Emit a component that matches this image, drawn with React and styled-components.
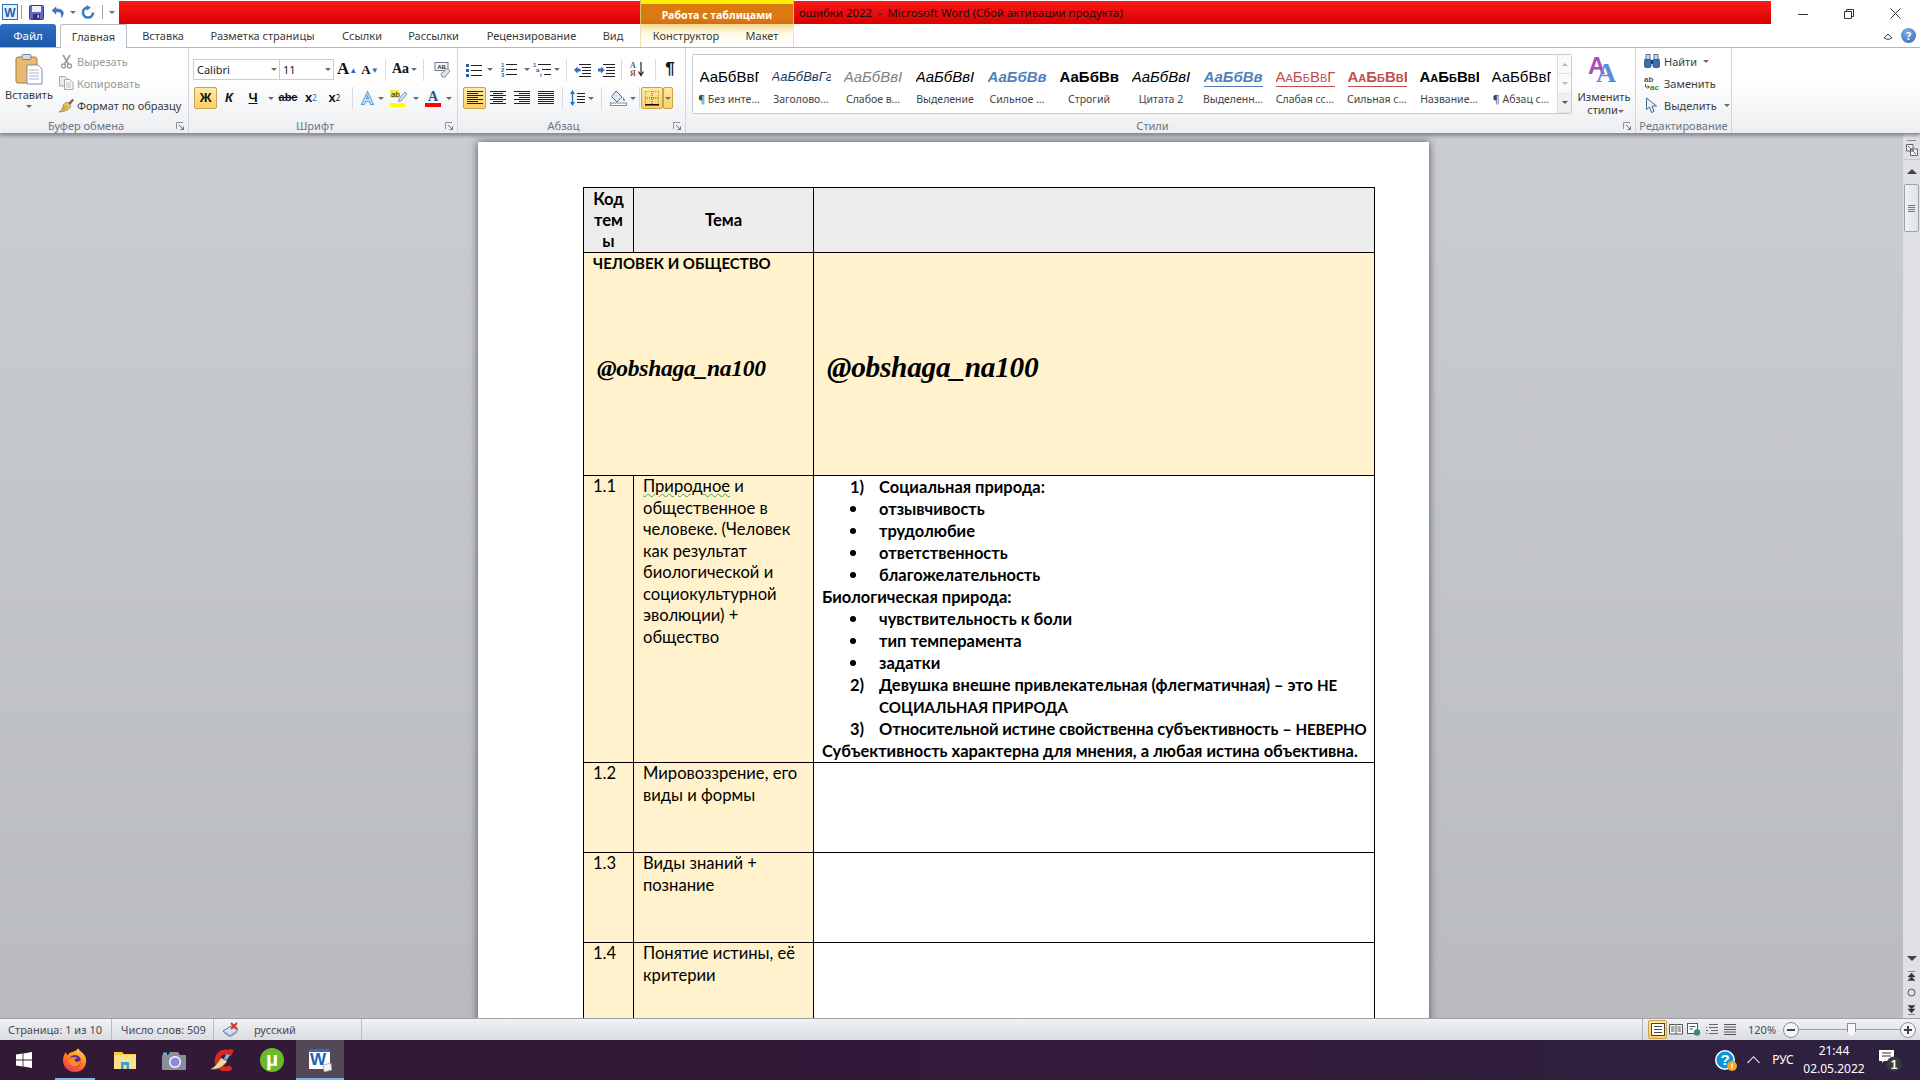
import React from "react";
import styled, { createGlobalStyle } from "styled-components";

const UI = `"Noto Sans", "Open Sans", sans-serif`;
const DOC = `Lato, "Open Sans", "Noto Sans", sans-serif`;

const GlobalStyle = createGlobalStyle`
  html, body { margin: 0; padding: 0; background: #fff; overflow: hidden; }
  * { box-sizing: border-box; }
`;

/* ---------- icons ---------- */

const Svg = ({ w = 16, h = 16, children }) => (
  <svg width={w} height={h} viewBox={`0 0 ${w} ${h}`} style={{ display: "block", flex: "none" }}>
    {children}
  </svg>
);

const Lines = ({ rows, color = "#222", w = 16, h = 14 }) => (
  <Svg w={w} h={h}>
    {rows.map(([x1, x2, y], i) => (
      <rect key={i} x={x1} y={y} width={x2 - x1} height="1" fill={color} />
    ))}
  </Svg>
);

const alignRows = (kind) =>
  [0, 2, 4, 6, 8, 10, 12].map((y, i) => {
    const short = i % 2 === 1;
    if (kind === "left") return [0, short ? 11 : 16, y];
    if (kind === "right") return [short ? 5 : 0, 16, y];
    if (kind === "center") return [short ? 3 : 0, short ? 13 : 16, y];
    return [0, 16, y];
  });

const WordMini = () => (
  <Svg w={16} h={16}>
    <rect x="0.5" y="0.5" width="15" height="15" fill="#e8f1fb" stroke="#2b6cb8" />
    <text x="8" y="12.5" fontSize="12" fontWeight="700" textAnchor="middle" fill="#1d5fb0" fontFamily="Liberation Sans">W</text>
  </Svg>
);

const SaveIcon = () => (
  <Svg w={15} h={15}>
    <rect x="0.5" y="0.5" width="14" height="14" rx="1" fill="#6a66c6" stroke="#3b3a86" />
    <rect x="3" y="1" width="9" height="6" fill="#eef0fa" />
    <rect x="4" y="9" width="7" height="5" fill="#2f2f72" />
    <rect x="8.5" y="10" width="1.5" height="3" fill="#d8d8ef" />
  </Svg>
);

const UndoIcon = () => (
  <Svg w={15} h={14}>
    <path d="M5 2 L1 5.5 L5 9 V6.8 C9 6.4 11 8 10.5 12.5 C13.5 9 13.6 3.6 5 4 Z" fill="#3d78c4" stroke="#1f5ba6" strokeWidth="0.5" />
  </Svg>
);

const RedoIcon = () => (
  <Svg w={14} h={14}>
    <path d="M7 2.5 A5 5 0 1 0 12 7.5" fill="none" stroke="#3d78c4" strokeWidth="2.6" />
    <path d="M5.5 0 L10 2.8 L5.5 5.6 Z" fill="#3d78c4" />
  </Svg>
);

const PasteIcon = () => (
  <Svg w={28} h={31}>
    <rect x="1" y="3" width="21" height="26" rx="2" fill="#e9b872" stroke="#a97b3a" />
    <rect x="7" y="0.5" width="9" height="5" rx="1" fill="#d5d8de" stroke="#7d8490" />
    <path d="M12 11 H23 L27 15 V30 H12 Z" fill="#fff" stroke="#7f8ea3" />
    <path d="M14 16 H24 M14 19 H24 M14 22 H24 M14 25 H24" stroke="#a9b6c8" />
  </Svg>
);

const ScissorsIcon = () => (
  <Svg w={13} h={15}>
    <path d="M3 1 L8.5 10 M10 1 L4.5 10" stroke="#9b9b9b" strokeWidth="1.6" />
    <circle cx="3.5" cy="12" r="2" fill="none" stroke="#9b9b9b" strokeWidth="1.3" />
    <circle cx="9.5" cy="12" r="2" fill="none" stroke="#9b9b9b" strokeWidth="1.3" />
  </Svg>
);

const CopyIcon = () => (
  <Svg w={15} h={14}>
    <path d="M0.5 0.5 H6 L8 2.5 V10 H0.5 Z" fill="#ececec" stroke="#a8a8a8" />
    <path d="M5.5 3.5 H11 L14 6.5 V13.5 H5.5 Z" fill="#f6f6f6" stroke="#a8a8a8" />
    <path d="M7 7 H12 M7 9 H12 M7 11 H12" stroke="#c4c4c4" />
  </Svg>
);

const BrushIcon = () => (
  <Svg w={17} h={15}>
    <path d="M10 5 L14.5 0.8 L16 2.2 L12 7 Z" fill="#7a6a3a" />
    <path d="M9 4 L13 8 C11 12 6 14 1 14 C4 12 5 10 5.5 6.5 Z" fill="#e8c860" stroke="#8a7430" strokeWidth="0.7" />
    <path d="M5 10 L9 7 M4 12 L10 9" stroke="#9a8438" strokeWidth="0.7" />
  </Svg>
);

const ProofIcon = () => (
  <Svg w={17} h={16}>
    <rect x="1" y="0.5" width="13" height="8" fill="#f4f7fb" stroke="#6b7a8f" />
    <text x="7.5" y="7" fontSize="6" fontWeight="700" textAnchor="middle" fill="#333" fontFamily="Liberation Sans">AB</text>
    <path d="M7 12 L13 6.5 L16 9 L11 15 H8 Z" fill="#dfe4ea" stroke="#6b7a8f" strokeWidth="0.8" />
  </Svg>
);

const TextFxIcon = () => (
  <Svg w={15} h={16}>
    <path d="M7.5 1.5 L13.5 14.5 H10.6 L9.4 11.5 H5.6 L4.4 14.5 H1.5 Z M6.5 9 H8.5 L7.5 6 Z" fill="#cfe6fa" stroke="#5aa3e0" strokeWidth="1.1" />
  </Svg>
);

const HighlightIcon = () => (
  <Svg w={17} h={18}>
    <rect x="0" y="1" width="9" height="8" fill="#e6e600" opacity="0.7" />
    <text x="1" y="8" fontSize="8" fill="#222" fontFamily="Liberation Sans">ab</text>
    <path d="M9 10 L15 3 L17 5 L11 12 L8.5 12.5 Z" fill="#d6e4f3" stroke="#5a7ca0" strokeWidth="0.8" />
    <rect x="0" y="14" width="16" height="4" fill="#ffff00" />
  </Svg>
);

const FontColorIcon = () => (
  <Svg w={16} h={18}>
    <text x="8" y="12" fontSize="14" fontWeight="700" textAnchor="middle" fill="#2c4f8c" fontFamily="Liberation Serif">A</text>
    <rect x="0" y="14" width="16" height="4" fill="#ff0000" />
  </Svg>
);

const BulletsIcon = () => (
  <Svg w={16} h={14}>
    {[1, 6, 11].map((y) => (
      <g key={y}>
        <rect x="0" y={y} width="3" height="3" fill="#2a5fa8" />
        <rect x="5" y={y + 1} width="11" height="1" fill="#222" />
      </g>
    ))}
  </Svg>
);

const NumbersIcon = () => (
  <Svg w={16} h={16}>
    {[["1", 5], ["2", 10], ["3", 15]].map(([n, y]) => (
      <g key={n}>
        <text x="0" y={y} fontSize="6" fontWeight="700" fill="#2a5fa8" fontFamily="Liberation Sans">{n}</text>
        <rect x="5" y={y - 3} width="11" height="1" fill="#222" />
      </g>
    ))}
  </Svg>
);

const MultiIcon = () => (
  <Svg w={18} h={16}>
    <text x="0" y="5" fontSize="6" fontWeight="700" fill="#2a5fa8" fontFamily="Liberation Sans">1</text>
    <text x="3" y="10" fontSize="6" fontWeight="700" fill="#2a5fa8" fontFamily="Liberation Sans">a</text>
    <text x="7" y="15" fontSize="6" fontWeight="700" fill="#2a5fa8" fontFamily="Liberation Sans">i</text>
    <path d="M5 2.5 H18 M9 7.5 H18 M11 12.5 H18" stroke="#222" />
  </Svg>
);

const IndentIcon = ({ flip }) => (
  <Svg w={17} h={14}>
    <path d="M5 1.5 H17 M8 4.5 H17 M8 7.5 H17 M8 10.5 H17 M5 13.5 H17" stroke="#222" />
    <path d={flip ? "M0 5.5 H3 V3.5 L6.5 7 L3 10.5 V8.5 H0 Z" : "M6.5 5.5 H3.5 V3.5 L0 7 L3.5 10.5 V8.5 H6.5 Z"} fill="#2a6fc0" />
  </Svg>
);

const SortIcon = () => (
  <Svg w={15} h={17}>
    <text x="0" y="7" fontSize="8" fontWeight="700" fill="#2a5fa8" fontFamily="Liberation Serif">А</text>
    <text x="0" y="15" fontSize="8" fontWeight="700" fill="#a0522d" fontFamily="Liberation Serif">Я</text>
    <path d="M11 1 V13 M8.5 10.5 L11 14.5 L13.5 10.5" fill="none" stroke="#222" strokeWidth="1.2" />
  </Svg>
);

const LineSpacingIcon = () => (
  <Svg w={15} h={16}>
    <path d="M2.5 0 L5 4 H0 Z M2.5 16 L5 12 H0 Z" fill="#2a6fc0" />
    <rect x="1.8" y="4" width="1.4" height="8" fill="#2a6fc0" />
    <path d="M7 3.5 H15 M7 6.5 H15 M7 9.5 H15 M7 12.5 H15" stroke="#222" />
  </Svg>
);

const ShadingIcon = () => (
  <Svg w={17} h={16}>
    <path d="M6 1 L12 7 L7 12 L1.5 6.5 Z" fill="#dce9f6" stroke="#4d6f93" />
    <path d="M13 7 C14.5 9 15.5 10 14.5 11 C13.5 11.5 12.5 10 13 7 Z" fill="#3d8bd0" />
    <rect x="0.5" y="13" width="16" height="2.5" fill="#fff" stroke="#8b8b8b" />
  </Svg>
);

const BordersIcon = () => (
  <Svg w={14} h={15}>
    <rect x="0" y="0" width="14" height="14" fill="none" stroke="#555" strokeDasharray="1 1" />
    <path d="M7 0 V14 M0 7 H14" stroke="#555" strokeDasharray="1 1" />
    <rect x="0" y="13" width="14" height="1.5" fill="#111" />
  </Svg>
);

const ChangeStylesIcon = () => (
  <Svg w={32} h={30}>
    <text x="0" y="20" fontSize="24" fontWeight="700" fill="#a94dbb" fontFamily="Liberation Sans">A</text>
    <text x="8" y="28" fontSize="28" fontWeight="700" fill="#5a8fd8" fontFamily="Liberation Serif">A</text>
  </Svg>
);

const BinocularsIcon = () => (
  <Svg w={16} h={14}>
    <rect x="0.5" y="5" width="6.5" height="8.5" rx="1.5" fill="#3d6fae" stroke="#203f70" strokeWidth="0.7" />
    <rect x="9" y="5" width="6.5" height="8.5" rx="1.5" fill="#3d6fae" stroke="#203f70" strokeWidth="0.7" />
    <rect x="2" y="0.5" width="4" height="5" fill="#c9d9ee" stroke="#203f70" strokeWidth="0.7" />
    <rect x="10" y="0.5" width="4" height="5" fill="#c9d9ee" stroke="#203f70" strokeWidth="0.7" />
    <rect x="7" y="6" width="2" height="4" fill="#203f70" />
  </Svg>
);

const ReplaceIcon = () => (
  <Svg w={17} h={16}>
    <text x="0" y="7" fontSize="8" fontWeight="700" fill="#555" fontFamily="Liberation Sans">ab</text>
    <text x="6" y="15" fontSize="8" fontWeight="700" fill="#1f8a3a" fontFamily="Liberation Sans">ac</text>
    <path d="M1.5 9 V12 H5 M3.5 10.5 L5.5 12 L3.5 13.5" fill="none" stroke="#333" strokeWidth="0.8" />
  </Svg>
);

const CursorIcon = () => (
  <Svg w={13} h={17}>
    <path d="M1.5 1 L1.5 12.5 L4.5 10 L6.5 15.5 L9 14.5 L7 9.2 L11.5 9 Z" fill="#eaf1fa" stroke="#4a6a90" />
  </Svg>
);

const SpellIcon = () => (
  <Svg w={17} h={15}>
    <path d="M1 9 L9 4 L16 8 L8 14 Z" fill="#cfe0f4" stroke="#5878a4" />
    <path d="M2 11 L8 15 L16 10" fill="none" stroke="#8fa5c4" />
    <path d="M9 1 L15 7 M15 1 L9 7" stroke="#e03020" strokeWidth="2" />
  </Svg>
);

const ViewIcon = ({ kind }) => (
  <Svg w={14} h={13}>
    {kind === "print" && (
      <>
        <rect x="0.5" y="0.5" width="13" height="12" fill="#fff" stroke="#444" />
        <path d="M3 3.5 H11 M3 6.5 H11 M3 9.5 H11" stroke="#444" />
      </>
    )}
    {kind === "read" && (
      <>
        <path d="M0.5 1.5 H6.5 L7 2 L7.5 1.5 H13.5 V11 H0.5 Z" fill="#fff" stroke="#555" />
        <path d="M7 2 V11 M2 4 H5.5 M2 6 H5.5 M2 8 H5.5 M8.5 4 H12 M8.5 6 H12 M8.5 8 H12" stroke="#555" />
      </>
    )}
    {kind === "web" && (
      <>
        <rect x="0.5" y="0.5" width="10" height="10" fill="#fff" stroke="#555" />
        <path d="M2.5 3.5 H8.5 M2.5 6 H6" stroke="#555" />
        <circle cx="10" cy="9.5" r="3.2" fill="#3a8c6a" />
      </>
    )}
    {kind === "outline" && <path d="M4 1.5 H13 M1 4.5 H2 M4 4.5 H13 M6 7.5 H13 M1 7.5 H3 M4 10.5 H13 M1 10.5 H2" stroke="#666" />}
    {kind === "draft" && <path d="M1 1.5 H13 M1 4 H13 M1 6.5 H13 M1 9 H13 M1 11.5 H13" stroke="#555" />}
  </Svg>
);

const RoundBtn = ({ plus }) => (
  <Svg w={16} h={16}>
    <circle cx="8" cy="8" r="7.5" fill="#f4f5f7" stroke="#8a8f96" />
    <path d={plus ? "M4 8 H12 M8 4 V12" : "M4 8 H12"} stroke="#444" strokeWidth="2" />
  </Svg>
);

const WindowsLogo = () => (
  <Svg w={16} h={16}>
    <path d="M0 2.4 L6.6 1.5 V7.5 H0 Z M7.4 1.4 L16 0 V7.5 H7.4 Z M0 8.5 H6.6 V14.5 L0 13.6 Z M7.4 8.5 H16 V16 L7.4 14.6 Z" fill="#fff" />
  </Svg>
);

const FirefoxLogo = () => (
  <Svg w={24} h={24}>
    <defs>
      <linearGradient id="ffx" x1="0.7" y1="0" x2="0.2" y2="1">
        <stop offset="0" stopColor="#ffd53d" />
        <stop offset="0.5" stopColor="#ff7a1f" />
        <stop offset="1" stopColor="#ee2a6c" />
      </linearGradient>
    </defs>
    <path d="M15 0 C16 3 20 4 22 8 C25 14 22 24 12 24 C4 24 0 18 0 12 C0 8 2 5 3 4 C3 6 4 7 5 7 C6 4 10 4 12 3 C14 2 15 1 15 0 Z" fill="url(#ffx)" />
    <circle cx="12" cy="13" r="6" fill="#5a2a9c" />
    <path d="M6 11 C8 9 12 8 15 10 C13 10 11 11 12 13 C14 15 17 13 18 12 C18 17 13 20 9 18 C6 16 5 14 6 11 Z" fill="#ff8a1f" />
  </Svg>
);

const FolderLogo = () => (
  <Svg w={22} h={18}>
    <path d="M0 1 H8 L10 3 H22 V18 H0 Z" fill="#f5c842" />
    <rect x="0" y="4" width="22" height="14" fill="#ffe08a" />
    <rect x="7" y="11" width="8" height="7" fill="#3b9ad9" />
    <rect x="9.5" y="14" width="3" height="4" fill="#ffe08a" />
  </Svg>
);

const CameraLogo = () => (
  <Svg w={24} h={19}>
    <path d="M1 4 H6 L8 1 H16 L18 4 H23 Q24 4 24 5 V18 Q24 19 23 19 H1 Q0 19 0 18 V5 Q0 4 1 4 Z" fill="#8a9097" />
    <rect x="1" y="1.5" width="4" height="2.5" fill="#5bb4e8" />
    <circle cx="13" cy="11" r="6" fill="#fff" />
    <circle cx="13" cy="11" r="4.6" fill="#8f87e8" />
  </Svg>
);

const CCleanerLogo = () => (
  <Svg w={25} h={22}>
    <path d="M21 5 A8.5 8.5 0 1 0 21 18" fill="none" stroke="#d8291e" strokeWidth="5" />
    <path d="M19 0 L24 1 L21 7 L17 6 Z" fill="#d8291e" />
    <path d="M16 5 L14 10 L17 11 L20 6 Z" fill="#7ab1d8" />
    <path d="M11 9 L17 12 C14 17 8 21 1 20 C5 18 8 14 11 9 Z" fill="#ecd9a8" stroke="#a88c50" strokeWidth="0.6" />
  </Svg>
);

const TorrentLogo = () => (
  <Svg w={24} h={24}>
    <circle cx="12" cy="12" r="12" fill="#6cb82f" />
    <text x="12" y="18" fontSize="21" fontWeight="700" textAnchor="middle" fill="#fff" fontFamily="Liberation Sans">µ</text>
  </Svg>
);

const WordLogo = () => (
  <Svg w={24} h={23}>
    <rect x="1" y="0" width="21" height="20" fill="#fff" />
    <rect x="1" y="0" width="21" height="3" fill="#2b6cc4" />
    <text x="10" y="16" fontSize="17" fontWeight="700" textAnchor="middle" fill="#1c5fb5" fontFamily="Liberation Sans">W</text>
    <path d="M15 16 L23 14 L24 21 L16 23 Z" fill="#f2f2f2" stroke="#8a8a8a" strokeWidth="0.6" />
  </Svg>
);

const HelpTray = () => (
  <Svg w={24} h={23}>
    <circle cx="11" cy="11" r="10" fill="#fff" />
    <circle cx="11" cy="11" r="8.5" fill="#0c95d8" />
    <text x="11" y="16" fontSize="15" fontWeight="700" textAnchor="middle" fill="#fff" fontFamily="Liberation Sans">?</text>
    <circle cx="18" cy="17" r="5" fill="#f5a623" />
    <rect x="17.3" y="14.5" width="1.4" height="5" fill="#fff" />
  </Svg>
);

const NotifyIcon = () => (
  <Svg w={24} h={24}>
    <path d="M0 2 H15 V13 H5 L3 15 V13 H0 Z" fill="#fff" />
    <path d="M3 5 H12 M3 8 H12" stroke="#333" />
    <circle cx="15" cy="16" r="7.5" fill="#3a3a3c" />
    <text x="15" y="20.5" fontSize="12" fontWeight="700" textAnchor="middle" fill="#fff" fontFamily="Liberation Sans">1</text>
  </Svg>
);

const LauncherIcon = () => (
  <Svg w={8} h={8}>
    <path d="M0.5 7 V0.5 H7" fill="none" stroke="#8c929a" />
    <path d="M3 3 L7.5 7.5 M7.5 4.5 V7.5 H4.5" fill="none" stroke="#6f757d" />
  </Svg>
);

/* ---------- app frame ---------- */

const Root = styled.div`
  width: 1920px;
  height: 1080px;
  display: flex;
  flex-direction: column;
  overflow: hidden;
  font-family: ${UI};
  background: #fff;
`;

const TitleBar = styled.div`
  height: 24px;
  flex: none;
  display: flex;
  align-items: stretch;
  background: #fff;
`;

const Qat = styled.div`
  width: 119px;
  display: flex;
  align-items: center;
  padding: 0 0 0 2px;
`;

const QatSlot = styled.div`
  width: ${(p) => p.$w}px;
  display: flex;
  justify-content: center;
  align-items: center;
`;

const QatSep = styled.div`
  width: 1px;
  height: 14px;
  background: #9aa0a8;
  margin: 0 3px;
`;

const RedBand = styled.div`
  margin-top: 1px;
  background: linear-gradient(#fb1a1a, #d90000);
  width: ${(p) => p.$w}px;
  display: flex;
  align-items: center;
  padding-left: 5px;
  font-size: 11.4px;
  color: #111;
  white-space: pre;
`;

const ContextHead = styled.div`
  width: 154px;
  border-left: 1px solid #d9c16a;
  border-right: 1px solid #d9c16a;
  background: linear-gradient(#fff000 0 4px, #dc7a12 4px, #dc7a12 18px, #d96a16);
  color: #fff;
  font-weight: 700;
  font-size: 10.7px;
  text-align: center;
  padding-top: 7px;
  line-height: 16px;
  white-space: nowrap;
`;

const WinControls = styled.div`
  margin-left: auto;
  display: flex;
  padding: 3px 2px 0 0;
`;

const WinBtn = styled.div`
  width: 46px;
  display: flex;
  justify-content: center;
  align-items: center;
`;

const TabRow = styled.div`
  height: 24px;
  flex: none;
  display: flex;
  align-items: flex-end;
  border-bottom: 1px solid #b6bcc4;
  background: #fff;
  position: relative;
`;

const FileTab = styled.div`
  width: 56px;
  height: 23px;
  margin-right: 4px;
  border-radius: 3px 3px 0 0;
  background: linear-gradient(#2f71c5, #1a56a8);
  color: #fff;
  font-size: 11.5px;
  text-align: center;
  line-height: 23px;
`;

const Tab = styled.div`
  width: ${(p) => p.$w}px;
  flex: none;
  height: ${(p) => (p.$active ? "24px" : "23px")};
  font-size: 11px;
  color: #3b3b3b;
  text-align: center;
  line-height: 24px;
  white-space: nowrap;
  ${(p) =>
    p.$active &&
    `
    background: #fff;
    border: 1px solid #b6bcc4;
    border-bottom: none;
    border-radius: 3px 3px 0 0;
    margin-bottom: -1px;
  `}
`;

const ContextTabs = styled.div`
  display: flex;
  height: 23px;
  width: 154px;
  margin-left: ${(p) => p.$ml}px;
  background: linear-gradient(#f5d98a, #fffbe8 40%, #fff);
  border-left: 1px solid #ece2b0;
  border-right: 1px solid #ece2b0;
`;

const Help = styled.div`
  margin-left: auto;
  display: flex;
  align-items: center;
  gap: 8px;
  height: 23px;
  padding-right: 4px;
`;

const HelpDot = styled.div`
  width: 15px;
  height: 15px;
  border-radius: 50%;
  background: radial-gradient(circle at 40% 30%, #7eaee8, #2a66b8);
  color: #fff;
  font-size: 11px;
  font-weight: 700;
  text-align: center;
  line-height: 15px;
`;

/* ---------- ribbon ---------- */

const Ribbon = styled.div`
  height: 86px;
  flex: none;
  display: flex;
  background: linear-gradient(#fff 35%, #eceef1);
  border-bottom: 1px solid #8d9299;
  box-shadow: 0 2px 3px rgba(60, 65, 75, 0.45);
  position: relative;
  z-index: 2;
`;

const Group = styled.div`
  width: ${(p) => p.$w}px;
  flex: none;
  display: flex;
  flex-direction: column;
  border-right: 1px solid #d3d6db;
`;

const GroupBody = styled.div`
  flex: 1;
  min-height: 0;
  display: flex;
  padding: ${(p) => p.$pad || "0"};
`;

const GroupLabel = styled.div`
  height: 16px;
  padding-top: 2px;
  flex: none;
  display: grid;
  grid-template-columns: ${(p) => (p.$launcher ? "1fr 16px" : "1fr")};
  align-items: start;
  font-size: 11px;
  color: #6d7480;
  text-align: center;
  line-height: 13px;
  white-space: nowrap;
  svg {
    margin: 3px 0 0 4px;
  }
`;

const BigButton = styled.div`
  width: ${(p) => p.$w}px;
  flex: none;
  display: flex;
  flex-direction: column;
  align-items: center;
  font-size: 11px;
  color: #3b3b3b;
  line-height: 13px;
  padding-top: ${(p) => p.$top || 0}px;
  text-align: center;
`;

const BigText = styled.div`
  margin-top: ${(p) => p.$mt || 4}px;
  white-space: nowrap;
`;

const Column = styled.div`
  display: flex;
  flex-direction: column;
`;

const SmallRow = styled.div`
  height: 22px;
  display: flex;
  align-items: center;
  gap: ${(p) => p.$gap || 3}px;
  font-size: 11px;
  color: ${(p) => (p.$dim ? "#9a9a9a" : "#3b3b3b")};
  white-space: nowrap;
`;

const IconSlot = styled.div`
  width: ${(p) => p.$w}px;
  display: flex;
  justify-content: center;
  flex: none;
`;

const ToolColumn = styled.div`
  display: flex;
  flex-direction: column;
  gap: 7px;
`;

const ToolRow = styled.div`
  height: ${(p) => p.$h || 22}px;
  display: flex;
  align-items: center;
`;

const Combo = styled.div`
  width: ${(p) => p.$w}px;
  height: 21px;
  background: #fff;
  border: 1px solid #c9ccd1;
  margin-left: -1px;
  display: flex;
  align-items: center;
  justify-content: space-between;
  padding: 0 5px 0 3px;
  font-size: 11px;
  color: #222;
`;

const Tool = styled.div`
  width: ${(p) => p.$w}px;
  height: 22px;
  flex: none;
  display: flex;
  align-items: center;
  justify-content: center;
  color: #111;
  border-radius: 2px;
  ${(p) =>
    p.$on &&
    `
    background: linear-gradient(#fee9a4, #fbcf63);
    border: 1px solid #c9a24a;
  `}
`;

const Sep = styled.div`
  width: ${(p) => p.$w || 11}px;
  height: 22px;
  flex: none;
  display: flex;
  justify-content: center;
  &::before {
    content: "";
    width: 1px;
    height: 100%;
    background: #d7dade;
  }
`;

const Caret = styled.div`
  width: ${(p) => p.$w || 0}px;
  flex: none;
  display: ${(p) => (p.$inline ? "inline-flex" : "flex")};
  justify-content: center;
  align-items: center;
  margin-left: ${(p) => p.$ml || 0}px;
  &::before {
    content: "";
    border-left: 3px solid transparent;
    border-right: 3px solid transparent;
    border-top: 3px solid #6c6c6c;
  }
`;

const Glyph = styled.span`
  font-family: ${(p) => p.$font || `"Liberation Serif", serif`};
  font-size: ${(p) => p.$size || 14}px;
  font-weight: ${(p) => p.$weight || 700};
  font-style: ${(p) => (p.$italic ? "italic" : "normal")};
  color: ${(p) => p.$color || "#111"};
  text-decoration: ${(p) => p.$deco || "none"};
  line-height: 1.2;
  white-space: nowrap;
`;

const Sup = styled.sup`
  font-size: 8px;
  line-height: 0;
  color: ${(p) => p.$color || "#111"};
`;

const Sub = styled.sub`
  font-size: 8px;
  line-height: 0;
  color: #3a6ab0;
`;

const Gallery = styled.div`
  width: 880px;
  height: 60px;
  flex: none;
  display: flex;
  background: #fff;
  border: 1px solid #c6c9ce;
  border-radius: 2px;
`;

const StyleItem = styled.div`
  width: 72px;
  flex: none;
  display: flex;
  flex-direction: column;
  align-items: center;
  padding-top: 12px;
`;

const StylePreview = styled.div`
  width: 59px;
  height: 20px;
  overflow: hidden;
  white-space: nowrap;
  text-align: center;
  font-family: "Liberation Sans", sans-serif;
  font-size: ${(p) => p.$size || 15}px;
  line-height: 19px;
  font-weight: ${(p) => (p.$bold ? 700 : 400)};
  font-style: ${(p) => (p.$italic ? "italic" : "normal")};
  color: ${(p) => p.$color || "#000"};
  font-variant: ${(p) => (p.$caps ? "small-caps" : "normal")};
  ${(p) => p.$under && `border-bottom: 1px solid ${p.$color};`}
`;

const StyleLabel = styled.div`
  font-size: 10.5px;
  color: #444;
  margin-top: 6px;
  line-height: 13px;
  white-space: nowrap;
`;

const GalleryScroll = styled.div`
  margin-left: auto;
  width: 14px;
  flex: none;
  display: flex;
  flex-direction: column;
  border-left: 1px solid #d8dade;
`;

const ScrollCell = styled.div`
  flex: 1;
  display: flex;
  align-items: center;
  justify-content: center;
  border-bottom: 1px solid #e2e4e7;
  background: ${(p) => (p.$more ? "#eef0f3" : "#fafafa")};
  &::before {
    content: "";
    border-left: 3px solid transparent;
    border-right: 3px solid transparent;
    ${(p) => (p.$up ? "border-bottom: 3px solid #b5b8bd;" : `border-top: 3px solid ${p.$more ? "#555" : "#b5b8bd"};`)}
  }
`;

/* ---------- document ---------- */

const Main = styled.div`
  flex: 1;
  min-height: 0;
  display: flex;
  overflow: hidden;
`;

const Canvas = styled.div`
  flex: 1;
  min-width: 0;
  overflow: hidden;
  padding: 8px 0 0 478px;
  background: linear-gradient(#cacdd2, #b9bbbf);
`;

const Page = styled.div`
  width: 951px;
  height: 1100px;
  background: #fff;
  padding: 45px 0 0 105px;
  box-shadow: 0 0 8px rgba(50, 52, 60, 0.8);
`;

const DocTable = styled.table`
  width: 792px;
  table-layout: fixed;
  border-collapse: collapse;
  font-family: ${DOC};
  font-size: 16.6px;
  line-height: 21.5px;
  color: #000;
  td {
    border: 1px solid #000;
    padding: 0;
  }
`;

const HeadCell = styled.td`
  background: #ededed;
  font-weight: 700;
  text-align: center;
  vertical-align: middle;
  line-height: 21px;
`;

const TopicCell = styled.td`
  background: #fff2cc;
  vertical-align: top;
  padding: 0 4px 0 9px !important;
`;

const BodyCell = styled.td`
  vertical-align: top;
  padding: 0 2px 0 8px !important;
  font-weight: 700;
  font-size: 16.45px;
  line-height: 22px;
`;

const Caps = styled.span`
  font-size: 15.1px;
`;

const Heading = styled.div`
  font-weight: 700;
  font-size: 15px;
`;

const Signature = styled.div`
  font-family: "Liberation Serif", serif;
  font-style: italic;
  font-weight: 700;
  font-size: ${(p) => p.$size}px;
  line-height: 40px;
  letter-spacing: -0.3px;
  margin: ${(p) => p.$margin};
  white-space: nowrap;
`;

const Squiggle = styled.span`
  text-decoration: underline wavy #3aa655 1px;
  text-underline-offset: 1px;
`;

const ListRow = styled.div`
  display: flex;
  padding-left: 28px;
  white-space: nowrap;
  letter-spacing: ${(p) => (p.$tight ? "-0.13px" : "normal")};
`;

const Marker = styled.div`
  width: 29px;
  flex: none;
`;

const Dot = styled.div`
  width: 29px;
  flex: none;
  display: flex;
  align-items: center;
  &::before {
    content: "";
    width: 6px;
    height: 6px;
    border-radius: 50%;
    background: #000;
  }
`;

/* ---------- scrollbar ---------- */

const Scrollbar = styled.div`
  width: 17px;
  flex: none;
  display: flex;
  flex-direction: column;
  align-items: center;
  background: #dfe1e5;
`;

const RulerToggle = styled.div`
  width: 100%;
  height: 26px;
  display: flex;
  flex-direction: column;
  align-items: center;
  justify-content: flex-end;
  gap: 3px;
  padding-bottom: 3px;
  border-bottom: 1px solid #c4c7cc;
`;

const RulerDash = styled.div`
  width: 9px;
  height: 1px;
  background: #888;
`;

const Arrow = styled.div`
  height: ${(p) => p.$h}px;
  flex: none;
  display: flex;
  align-items: center;
  &::before {
    content: "";
    border-left: 5px solid transparent;
    border-right: 5px solid transparent;
    ${(p) => (p.$up ? "border-bottom: 5px solid #444;" : "border-top: 5px solid #444;")}
  }
`;

const Thumb = styled.div`
  width: 15px;
  height: 48px;
  flex: none;
  margin-top: 1px;
  background: linear-gradient(90deg, #f1f2f4, #dfe2e6);
  border: 1px solid #9ea3aa;
  border-radius: 2px;
  display: flex;
  align-items: center;
  justify-content: center;
`;

const ScrollSpace = styled.div`
  flex: 1;
`;

const NavGlyph = styled.div`
  height: 17px;
  flex: none;
  display: flex;
  align-items: center;
  justify-content: center;
`;

/* ---------- status + taskbar ---------- */

const StatusBar = styled.div`
  height: 22px;
  flex: none;
  display: flex;
  align-items: center;
  background: linear-gradient(#f1f2f4, #d9dce1);
  border-top: 1px solid #9ea2a8;
  font-size: 11px;
  color: #4a4a4a;
  position: relative;
  z-index: 2;
`;

const StatusCell = styled.div`
  width: ${(p) => p.$w}px;
  height: 100%;
  flex: none;
  display: flex;
  align-items: center;
  gap: ${(p) => p.$gap || 0}px;
  padding-left: ${(p) => p.$pl || 0}px;
  border-right: 1px solid #b8bbc0;
  white-space: nowrap;
`;

const StatusRight = styled.div`
  margin-left: auto;
  width: 278px;
  height: 100%;
  display: flex;
  align-items: center;
  border-left: 1px solid #b0b3b8;
  padding-left: 5px;
`;

const ViewBtn = styled.div`
  width: ${(p) => (p.$on ? 19 : 18)}px;
  height: 19px;
  flex: none;
  display: flex;
  align-items: center;
  justify-content: center;
  border-radius: 2px;
  ${(p) =>
    p.$on &&
    `
    background: linear-gradient(#fee9a4, #fbcf63);
    border: 1px solid #c9a24a;
  `}
`;

const Zoom = styled.div`
  width: 35px;
  flex: none;
  margin-left: 9px;
  color: #4a4a5a;
  font-size: 11px;
`;

const SliderTrack = styled.div`
  width: 101px;
  height: 1px;
  flex: none;
  background: #9ca1a8;
  display: flex;
  align-items: center;
  padding-left: 48px;
`;

const SliderThumb = styled.div`
  width: 9px;
  height: 14px;
  flex: none;
  background: #f6f7f8;
  border: 1px solid #8a8f96;
  clip-path: polygon(0 0, 100% 0, 100% 65%, 50% 100%, 0 65%);
`;

const Taskbar = styled.div`
  height: 40px;
  flex: none;
  display: flex;
  align-items: stretch;
  background: linear-gradient(90deg, #321a35, #34193a 55%, #2d2240);
  color: #fff;
`;

const TaskItem = styled.div`
  width: ${(p) => p.$w || 49}px;
  flex: none;
  position: relative;
  display: flex;
  align-items: center;
  justify-content: center;
  background: ${(p) => (p.$active ? "#544856" : "transparent")};
  ${(p) =>
    p.$open &&
    `
    &::after {
      content: "";
      position: absolute;
      left: ${p.$inset || 0}px;
      right: ${p.$inset || 0}px;
      bottom: 0;
      height: 2px;
      background: #76b9ed;
    }
  `}
`;

const StartItem = styled.div`
  width: 50px;
  flex: none;
  display: flex;
  align-items: center;
  justify-content: center;
  padding-right: 2px;
`;

const Tray = styled.div`
  margin-left: auto;
  display: flex;
  align-items: center;
  padding-right: 6px;
`;

const TraySlot = styled.div`
  width: ${(p) => p.$w}px;
  flex: none;
  display: flex;
  justify-content: center;
  align-items: center;
  font-size: 12px;
  line-height: 18px;
  text-align: center;
`;

const Clock = styled.div`
  white-space: nowrap;
`;

const Chevron = styled.div`
  width: 9px;
  height: 9px;
  margin-top: 5px;
  border-left: 1.3px solid #fff;
  border-top: 1.3px solid #fff;
  transform: rotate(45deg);
`;

/* ---------- data ---------- */

const tabs = [
  ["Вставка", 72],
  ["Разметка страницы", 127],
  ["Ссылки", 72],
  ["Рассылки", 71],
  ["Рецензирование", 125],
  ["Вид", 38],
];

const galleryStyles = [
  { p: "АаБбВвГ", l: "¶ Без инте..." },
  { p: "АаБбВвГг", l: "Заголово...", italic: true, color: "#17365d", size: 13 },
  { p: "АаБбВвI", l: "Слабое в...", italic: true, color: "#808080" },
  { p: "АаБбВвI", l: "Выделение", italic: true },
  { p: "АаБбВв", l: "Сильное ...", italic: true, bold: true, color: "#4f81bd" },
  { p: "АаБбВвI", l: "Строгий", bold: true },
  { p: "АаБбВвI", l: "Цитата 2", italic: true },
  { p: "АаБбВв", l: "Выделенн...", italic: true, bold: true, color: "#4f81bd", under: true },
  { p: "АаБбВвГ", l: "Слабая сс...", color: "#c0504d", under: true, caps: true },
  { p: "АаБбВвI", l: "Сильная с...", color: "#c0504d", under: true, caps: true, bold: true },
  { p: "АаБбВвI", l: "Название...", caps: true, bold: true },
  { p: "АаБбВвГ", l: "¶ Абзац с..." },
];

const socialTraits = ["отзывчивость", "трудолюбие", "ответственность", "благожелательность"];
const bioTraits = ["чувствительность к боли", "тип темперамента", "задатки"];

const firstTopic = ["общественное в", "человеке. (Человек", "как результат", "биологической и", "социокультурной", "эволюции) +", "общество"];

const rows = [
  { code: "1.2", lines: ["Мировоззрение, его", "виды и формы"], h: 90 },
  { code: "1.3", lines: ["Виды знаний +", "познание"], h: 90 },
  { code: "1.4", lines: ["Понятие истины, её", "критерии"], h: 90 },
];

const Label = ({ children, launcher }) => (
  <GroupLabel $launcher={launcher}>
    <span>{children}</span>
    {launcher && <LauncherIcon />}
  </GroupLabel>
);

export default function App() {
  return (
    <Root>
      <GlobalStyle />

      <TitleBar>
        <Qat>
          <QatSlot $w={16}><WordMini /></QatSlot>
          <QatSep />
          <QatSlot $w={22}><SaveIcon /></QatSlot>
          <QatSlot $w={22}><UndoIcon /></QatSlot>
          <Caret $w={8} />
          <QatSlot $w={22}><RedoIcon /></QatSlot>
          <QatSep />
          <Caret $w={12} />
        </Qat>
        <RedBand $w={521} />
        <ContextHead>Работа с таблицами</ContextHead>
        <RedBand $w={977}>ошибки 2022  -  Microsoft Word (Сбой активации продукта)</RedBand>
        <WinControls>
          <WinBtn>
            <Svg w={10} h={10}><rect x="0" y="5" width="10" height="1" fill="#333" /></Svg>
          </WinBtn>
          <WinBtn>
            <Svg w={10} h={10}><path d="M0.5 2.5 H7.5 V9.5 H0.5 Z M2.5 2.5 V0.5 H9.5 V7.5 H7.5" fill="none" stroke="#333" /></Svg>
          </WinBtn>
          <WinBtn>
            <Svg w={11} h={11}><path d="M0.5 0.5 L10.5 10.5 M10.5 0.5 L0.5 10.5" stroke="#333" /></Svg>
          </WinBtn>
        </WinControls>
      </TitleBar>

      <TabRow>
        <FileTab>Файл</FileTab>
        <Tab $w={67} $active>Главная</Tab>
        {tabs.map(([name, w]) => (
          <Tab key={name} $w={w}>{name}</Tab>
        ))}
        <ContextTabs $ml={8}>
          <Tab $w={90}>Конструктор</Tab>
          <Tab $w={62}>Макет</Tab>
        </ContextTabs>
        <Help>
          <Svg w={10} h={8}><path d="M1 6 L5 2 L9 6 L5 7.5 Z" fill="none" stroke="#444" /></Svg>
          <HelpDot>?</HelpDot>
        </Help>
      </TabRow>

      <Ribbon>
        <Group $w={189}>
          <GroupBody $pad="2px 0 0 0">
            <BigButton $w={58} $top={4}>
              <PasteIcon />
              <BigText $mt={3}>Вставить</BigText>
              <Caret $w={10} style={{ height: 11 }} />
            </BigButton>
            <Column>
              <SmallRow $dim><IconSlot $w={16}><ScissorsIcon /></IconSlot>Вырезать</SmallRow>
              <SmallRow $dim><IconSlot $w={16}><CopyIcon /></IconSlot>Копировать</SmallRow>
              <SmallRow><IconSlot $w={16}><BrushIcon /></IconSlot>Формат по образцу</SmallRow>
            </Column>
          </GroupBody>
          <Label launcher>Буфер обмена</Label>
        </Group>

        <Group $w={269}>
          <GroupBody $pad="11px 0 0 5px">
            <ToolColumn>
              <ToolRow $h={21}>
                <Combo $w={87}>Calibri<Caret /></Combo>
                <Combo $w={55}>11<Caret /></Combo>
                <Tool $w={26}><Glyph $size={17}>A</Glyph><Sup $color="#2a6fc0">▲</Sup></Tool>
                <Tool $w={20}><Glyph $size={13}>A</Glyph><Sup $color="#2a6fc0">▼</Sup></Tool>
                <Sep />
                <Tool $w={28}><Glyph $size={14}>Aa</Glyph><Caret $w={9} /></Tool>
                <Sep $w={9} />
                <Tool $w={28}><ProofIcon /></Tool>
              </ToolRow>
              <ToolRow>
                <Tool $w={23} $on><Glyph $size={13} $font="Liberation Sans">Ж</Glyph></Tool>
                <Tool $w={24}><Glyph $size={13} $italic $font="Liberation Sans">К</Glyph></Tool>
                <Tool $w={24}><Glyph $size={13} $deco="underline" $font="Liberation Sans">Ч</Glyph></Tool>
                <Caret $w={11} />
                <Tool $w={24}><Glyph $size={11} $deco="line-through" $font="Liberation Sans">abc</Glyph></Tool>
                <Tool $w={22}><Glyph $size={13} $font="Liberation Sans">x</Glyph><Sub>2</Sub></Tool>
                <Tool $w={25}><Glyph $size={13} $font="Liberation Sans">x</Glyph><Sup>2</Sup></Tool>
                <Sep $w={10} />
                <Tool $w={20}><TextFxIcon /></Tool>
                <Caret $w={8} />
                <Tool $w={26}><HighlightIcon /></Tool>
                <Caret $w={9} />
                <Tool $w={25}><FontColorIcon /></Tool>
                <Caret $w={8} />
              </ToolRow>
            </ToolColumn>
          </GroupBody>
          <Label launcher>Шрифт</Label>
        </Group>

        <Group $w={228}>
          <GroupBody $pad="11px 0 0 5px">
            <ToolColumn>
              <ToolRow $h={21}>
                <Tool $w={22}><BulletsIcon /></Tool>
                <Caret $w={10} />
                <Tool $w={27}><NumbersIcon /></Tool>
                <Caret $w={10} />
                <Tool $w={20}><MultiIcon /></Tool>
                <Caret $w={10} />
                <Sep $w={8} />
                <Tool $w={25}><IndentIcon /></Tool>
                <Tool $w={22}><IndentIcon flip /></Tool>
                <Sep $w={8} />
                <Tool $w={24}><SortIcon /></Tool>
                <Sep $w={12} />
                <Tool $w={18}><Glyph $size={17} $font="Liberation Sans">¶</Glyph></Tool>
              </ToolRow>
              <ToolRow>
                <Tool $w={23} $on><Lines rows={alignRows("left")} /></Tool>
                <Tool $w={24}><Lines rows={alignRows("center")} /></Tool>
                <Tool $w={24}><Lines rows={alignRows("right")} /></Tool>
                <Tool $w={24}><Lines rows={alignRows("justify")} /></Tool>
                <Sep $w={8} />
                <Tool $w={22}><LineSpacingIcon /></Tool>
                <Caret $w={6} />
                <Sep $w={14} />
                <Tool $w={20}><ShadingIcon /></Tool>
                <Caret $w={10} />
                <Sep $w={3} />
                <Tool $w={22} $on><BordersIcon /></Tool>
                <Tool $w={10} $on><Caret /></Tool>
              </ToolRow>
            </ToolColumn>
          </GroupBody>
          <Label launcher>Абзац</Label>
        </Group>

        <Group $w={950}>
          <GroupBody $pad="6px 0 0 6px">
            <Gallery>
              {galleryStyles.map((s) => (
                <StyleItem key={s.l}>
                  <StylePreview $bold={s.bold} $italic={s.italic} $color={s.color} $size={s.size} $under={s.under} $caps={s.caps}>
                    {s.p}
                  </StylePreview>
                  <StyleLabel>{s.l}</StyleLabel>
                </StyleItem>
              ))}
              <GalleryScroll>
                <ScrollCell $up />
                <ScrollCell />
                <ScrollCell $more />
              </GalleryScroll>
            </Gallery>
            <BigButton $w={64}>
              <ChangeStylesIcon />
              <BigText $mt={6}>Изменить</BigText>
              <div>стили <Caret $inline style={{ verticalAlign: "middle" }} /></div>
            </BigButton>
          </GroupBody>
          <Label launcher>Стили</Label>
        </Group>

        <Group $w={96}>
          <GroupBody $pad="2px 0 0 8px">
            <Column>
              <SmallRow $gap={4}><BinocularsIcon />Найти<Caret $w={10} /></SmallRow>
              <SmallRow $gap={3}><ReplaceIcon />Заменить</SmallRow>
              <SmallRow $gap={6}><IconSlot $w={14}><CursorIcon /></IconSlot>Выделить<Caret $w={8} /></SmallRow>
            </Column>
          </GroupBody>
          <Label>Редактирование</Label>
        </Group>
      </Ribbon>

      <Main>
        <Canvas>
          <Page>
            <DocTable>
              <colgroup>
                <col style={{ width: 50 }} />
                <col style={{ width: 180 }} />
                <col />
              </colgroup>
              <tbody>
                <tr style={{ height: 65 }}>
                  <HeadCell>Код<br />тем<br />ы</HeadCell>
                  <HeadCell>Тема</HeadCell>
                  <HeadCell />
                </tr>
                <tr style={{ height: 223 }}>
                  <TopicCell colSpan={2}>
                    <Heading>ЧЕЛОВЕК И ОБЩЕСТВО</Heading>
                    <Signature $size={23.6} $margin="73px 0 0 4px">@obshaga_na100</Signature>
                  </TopicCell>
                  <TopicCell>
                    <Signature $size={29.4} $margin="94px 0 0 4px">@obshaga_na100</Signature>
                  </TopicCell>
                </tr>
                <tr style={{ height: 287 }}>
                  <TopicCell>1.1</TopicCell>
                  <TopicCell>
                    <Squiggle>Природное</Squiggle> и
                    {firstTopic.map((line) => (
                      <div key={line}>{line}</div>
                    ))}
                  </TopicCell>
                  <BodyCell>
                    <ListRow><Marker>1)</Marker>Социальная природа:</ListRow>
                    {socialTraits.map((t) => (
                      <ListRow key={t}><Dot />{t}</ListRow>
                    ))}
                    <div>Биологическая природа:</div>
                    {bioTraits.map((t) => (
                      <ListRow key={t}><Dot />{t}</ListRow>
                    ))}
                    <ListRow>
                      <Marker>2)</Marker>
                      <div>Девушка внешне привлекательная (флегматичная) – это <Caps>НЕ</Caps><br /><Caps>СОЦИАЛЬНАЯ ПРИРОДА</Caps></div>
                    </ListRow>
                    <ListRow $tight><Marker>3)</Marker><span>Относительной истине свойственна субъективность – <Caps>НЕВЕРНО</Caps></span></ListRow>
                    <div>Субъективность характерна для мнения, а любая истина объективна.</div>
                  </BodyCell>
                </tr>
                {rows.map((r) => (
                  <tr key={r.code} style={{ height: r.h }}>
                    <TopicCell>{r.code}</TopicCell>
                    <TopicCell>
                      {r.lines.map((line) => (
                        <div key={line}>{line}</div>
                      ))}
                    </TopicCell>
                    <td />
                  </tr>
                ))}
              </tbody>
            </DocTable>
          </Page>
        </Canvas>

        <Scrollbar>
          <RulerToggle>
            <RulerDash />
            <Svg w={12} h={12}>
              <path d="M0.5 0.5 H7 V7 H0.5 Z M4.5 5 H11.5 V11.5 H4.5 Z M2 2 L10 10" fill="#f2f3f5" stroke="#666" />
            </Svg>
          </RulerToggle>
          <Arrow $up $h={23} />
          <Thumb>
            <Svg w={9} h={7}><path d="M1 0.5 H8 M1 2.5 H8 M1 4.5 H8 M1 6.5 H8" stroke="#777" /></Svg>
          </Thumb>
          <ScrollSpace />
          <Arrow $h={17} />
          <NavGlyph>
            <Svg w={9} h={10}><path d="M1 0.5 H8 M4.5 2 L8 6 H1 Z M4.5 6 L8 9.5 H1 Z" fill="#333" stroke="#333" strokeWidth="0.5" /></Svg>
          </NavGlyph>
          <NavGlyph>
            <Svg w={9} h={9}><circle cx="4.5" cy="4.5" r="3.5" fill="none" stroke="#555" /></Svg>
          </NavGlyph>
          <NavGlyph>
            <Svg w={9} h={10}><path d="M1 9.5 H8 M4.5 8 L8 4 H1 Z M4.5 4 L8 0.5 H1 Z" fill="#333" stroke="#333" strokeWidth="0.5" /></Svg>
          </NavGlyph>
        </Scrollbar>
      </Main>

      <StatusBar>
        <StatusCell $w={112} $pl={8}>Страница: 1 из 10</StatusCell>
        <StatusCell $w={102} $pl={9}>Число слов: 509</StatusCell>
        <StatusCell $w={148} $pl={8} $gap={15}><SpellIcon />русский</StatusCell>
        <StatusRight>
          <ViewBtn $on><ViewIcon kind="print" /></ViewBtn>
          <ViewBtn><ViewIcon kind="read" /></ViewBtn>
          <ViewBtn><ViewIcon kind="web" /></ViewBtn>
          <ViewBtn><ViewIcon kind="outline" /></ViewBtn>
          <ViewBtn><ViewIcon kind="draft" /></ViewBtn>
          <Zoom>120%</Zoom>
          <RoundBtn />
          <SliderTrack><SliderThumb /></SliderTrack>
          <RoundBtn plus />
        </StatusRight>
      </StatusBar>

      <Taskbar>
        <StartItem><WindowsLogo /></StartItem>
        <TaskItem $open $inset={5} $w={50}><FirefoxLogo /></TaskItem>
        <TaskItem><FolderLogo /></TaskItem>
        <TaskItem><CameraLogo /></TaskItem>
        <TaskItem><CCleanerLogo /></TaskItem>
        <TaskItem><TorrentLogo /></TaskItem>
        <TaskItem $open $active $w={48}><WordLogo /></TaskItem>
        <Tray>
          <TraySlot $w={28}><HelpTray /></TraySlot>
          <TraySlot $w={26}><Chevron /></TraySlot>
          <TraySlot $w={34}>РУС</TraySlot>
          <TraySlot $w={68}><Clock>21:44<br />02.05.2022</Clock></TraySlot>
          <TraySlot $w={46}><NotifyIcon /></TraySlot>
        </Tray>
      </Taskbar>
    </Root>
  );
}
